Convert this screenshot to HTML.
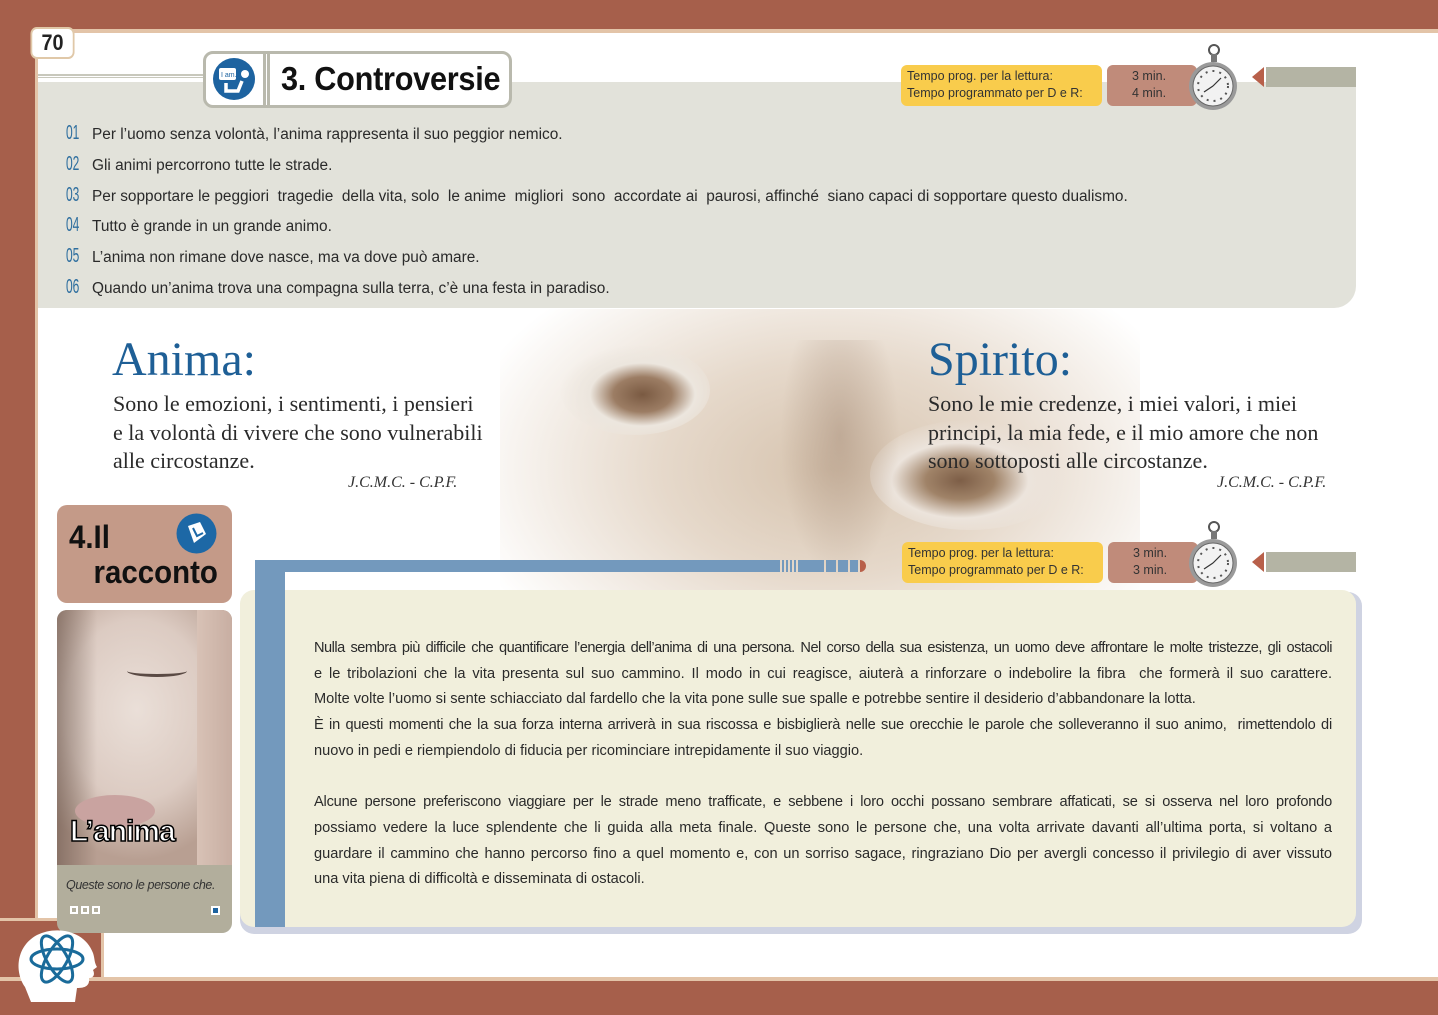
<!DOCTYPE html>
<html><head><meta charset="utf-8">
<style>
*{margin:0;padding:0;box-sizing:border-box}
body{width:1438px;height:1015px;position:relative;overflow:hidden;background:#fff;font-family:"Liberation Sans",sans-serif;color:#222}
.a{position:absolute}
.serif{font-family:"Liberation Serif",serif}
.q{position:absolute;left:66px;font-size:15.4px;color:#2a2a2a;white-space:nowrap}
.q b{display:inline-block;width:26px;color:#2f6f9f;font-weight:normal;font-size:20px;line-height:15px;transform:scaleX(.6);transform-origin:left}
.ln{text-align:justify;text-align-last:justify;white-space:nowrap;height:25.7px;font-size:14.6px;color:#2a2a2a}
.ln.l{text-align-last:left}
.tp{position:absolute;background:#f9cc4c;border-radius:6px;font-size:12.5px;color:#333;line-height:17px;padding:3px 6px;width:201px;height:41px}
.tm{position:absolute;background:#c08b7a;border-radius:6px;font-size:12.5px;color:#333;line-height:17px;padding:3px 0 0 25px;width:90px;height:41px}
</style></head><body>
<!-- frame -->
<div class="a" style="left:0;top:0;width:1438px;height:29px;background:#a65f4b"></div>
<div class="a" style="left:35px;top:29px;width:1403px;height:4px;background:#e3c4a8"></div>
<div class="a" style="left:0;top:0;width:35px;height:1015px;background:#a65f4b"></div>
<div class="a" style="left:35px;top:29px;width:3px;height:890px;background:#e3c4a8"></div>
<div class="a" style="left:0;top:918px;width:104px;height:97px;background:#a65f4b;border-top-right-radius:16px;border-right:3px solid #e3c4a8;border-top:3px solid #e3c4a8"></div>
<div class="a" style="left:0;top:977px;width:1438px;height:38px;background:#a65f4b;border-top:4px solid #e3c4a8"></div>
<div class="a" style="left:28px;top:27px;width:49px;height:32px;background:#fff;border:2px solid #e0c8a8;border-radius:7px;font-size:22px;font-weight:bold;text-align:center;line-height:28px;transform:scaleX(.9)">70</div>

<!-- top gray panel -->
<div class="a" style="left:38px;top:74px;width:170px;height:4px;border-top:2px solid #c8c8bc;border-bottom:1px solid #c8c8bc"></div>
<div class="a" style="left:38px;top:82px;width:1318px;height:226px;background:#e2e2da;border-bottom-right-radius:22px"></div>
<div class="a" style="left:203px;top:51px;width:309px;height:57px;background:#fff;border:3px solid #b9b9ad;border-radius:10px"></div>
<div class="a" style="left:263px;top:54px;width:7px;height:51px;border-left:3px solid #b9b9ad;border-right:3px solid #b9b9ad"></div>
<svg class="a" style="left:212px;top:57px" width="44" height="44" viewBox="0 0 44 44"><circle cx="22" cy="22" r="21" fill="#1d63a0"/><rect x="7" y="11" width="17" height="12" rx="2" fill="#fff"/><text x="9" y="20" font-size="7" fill="#1d63a0" font-family="Liberation Sans">I am..</text><circle cx="33" cy="17" r="4" fill="#fff"/><path d="M14 26v8h12l4-10" stroke="#fff" stroke-width="3.5" fill="none"/></svg>
<div class="a" style="left:281px;top:60px;font-size:33px;font-weight:bold;color:#111;letter-spacing:-.3px;transform:scaleX(.93);transform-origin:left">3. Controversie</div>

<div class="q" style="top:126px"><b>01</b>Per l’uomo senza volontà, l’anima rappresenta il suo peggior nemico.</div>
<div class="q" style="top:157px"><b>02</b>Gli animi percorrono tutte le strade.</div>
<div class="q" style="top:188px"><b>03</b>Per sopportare le peggiori &nbsp;tragedie &nbsp;della vita, solo &nbsp;le anime &nbsp;migliori &nbsp;sono &nbsp;accordate ai &nbsp;paurosi, affinché &nbsp;siano capaci di sopportare questo dualismo.</div>
<div class="q" style="top:218px"><b>04</b>Tutto è grande in un grande animo.</div>
<div class="q" style="top:249px"><b>05</b>L’anima non rimane dove nasce, ma va dove può amare.</div>
<div class="q" style="top:280px"><b>06</b>Quando un’anima trova una compagna sulla terra, c’è una festa in paradiso.</div>

<!-- timers top -->
<div class="tp" style="left:901px;top:65px">Tempo prog. per la lettura:<br>Tempo programmato per D e R:</div>
<div class="tm" style="left:1107px;top:65px">3 min.<br>4 min.</div>
<div class="a" style="left:1252px;top:67px;width:0;height:0;border-top:10px solid transparent;border-bottom:10px solid transparent;border-right:12px solid #b8604a"></div>
<div class="a" style="left:1266px;top:67px;width:90px;height:20px;background:#b4b4a4"></div>

<!-- face image -->
<div class="a" style="left:500px;top:309px;width:640px;height:282px;background:radial-gradient(ellipse 380px 240px at 330px 160px,#d6c3ae 0%,#e6d9cb 45%,rgba(255,255,255,0) 100%)"></div>
<div class="a" style="left:560px;top:345px;width:150px;height:90px;border-radius:50%;background:radial-gradient(ellipse at 55% 55%,#7a5a42 0,#9c7d64 25%,#ece6de 45%,rgba(240,234,228,0) 72%)"></div>
<div class="a" style="left:870px;top:420px;width:200px;height:110px;border-radius:50%;background:radial-gradient(ellipse at 45% 55%,#7d5e47 0,#a08368 22%,#ece4dc 44%,rgba(240,234,228,0) 72%)"></div>
<div class="a" style="left:780px;top:340px;width:120px;height:240px;background:radial-gradient(ellipse at 50% 40%,rgba(170,145,125,.55),rgba(200,180,160,0) 70%)"></div>

<div class="a serif" style="left:112px;top:332px;font-size:48px;color:#1e5f96">Anima:</div>
<div class="a serif" style="left:113px;top:390px;font-size:22px;line-height:28.6px;color:#2a2a2a">Sono le emozioni, i sentimenti, i pensieri<br>e la volontà di vivere che sono vulnerabili<br>alle circostanze.</div>
<div class="a serif" style="left:348px;top:474px;font-size:16px;font-style:italic;color:#333">J.C.M.C. - C.P.F.</div>
<div class="a serif" style="left:928px;top:332px;font-size:48px;color:#1e5f96">Spirito:</div>
<div class="a serif" style="left:928px;top:390px;font-size:22px;line-height:28.6px;color:#2a2a2a">Sono le mie credenze, i miei valori, i miei<br>principi, la mia fede, e il mio amore che non<br>sono sottoposti alle circostanze.</div>
<div class="a serif" style="left:1217px;top:474px;font-size:16px;font-style:italic;color:#333">J.C.M.C. - C.P.F.</div>

<!-- timers 2 -->
<div class="tp" style="left:902px;top:542px">Tempo prog. per la lettura:<br>Tempo programmato per D e R:</div>
<div class="tm" style="left:1108px;top:542px">3 min.<br>3 min.</div>
<div class="a" style="left:1252px;top:552px;width:0;height:0;border-top:10px solid transparent;border-bottom:10px solid transparent;border-right:12px solid #b8604a"></div>
<div class="a" style="left:1266px;top:552px;width:90px;height:20px;background:#b4b4a4"></div>
<svg class="a" style="left:1186px;top:42px" width="54" height="70" viewBox="0 0 54 70"><circle cx="28" cy="8" r="5" fill="none" stroke="#555" stroke-width="2"/><rect x="25" y="12" width="6" height="8" fill="#777"/><circle cx="27" cy="44" r="24" fill="#9a9a9a"/><circle cx="27" cy="44" r="20" fill="#f2f2f2" stroke="#666" stroke-width="1"/><g stroke="#555" stroke-width="2" stroke-dasharray="2 5" fill="none"><circle cx="27" cy="44" r="15"/></g><path d="M27 44L18 50M27 44l8-8" stroke="#333" stroke-width="1.2"/></svg>
<svg class="a" style="left:1186px;top:519px" width="54" height="70" viewBox="0 0 54 70"><circle cx="28" cy="8" r="5" fill="none" stroke="#555" stroke-width="2"/><rect x="25" y="12" width="6" height="8" fill="#777"/><circle cx="27" cy="44" r="24" fill="#9a9a9a"/><circle cx="27" cy="44" r="20" fill="#f2f2f2" stroke="#666" stroke-width="1"/><g stroke="#555" stroke-width="2" stroke-dasharray="2 5" fill="none"><circle cx="27" cy="44" r="15"/></g><path d="M27 44L18 50M27 44l8-8" stroke="#333" stroke-width="1.2"/></svg>

<!-- story box -->
<div class="a" style="left:240px;top:592px;width:1122px;height:342px;background:#cfd3e2;border-radius:14px"></div>
<div class="a" style="left:240px;top:590px;width:1116px;height:337px;background:#f1efdc;border-radius:14px"></div>
<div class="a" style="left:255px;top:560px;width:30px;height:367px;background:#7399bd"></div>
<div class="a" style="left:255px;top:560px;width:525px;height:12px;background:#7399bd"></div>
<div class="a" style="left:782px;top:560px;width:14px;height:12px;background:repeating-linear-gradient(90deg,#7399bd 0 2px,transparent 2px 4px)"></div>
<div class="a" style="left:798px;top:560px;width:26px;height:12px;background:#7399bd"></div>
<div class="a" style="left:826px;top:560px;width:10px;height:12px;background:#7399bd"></div>
<div class="a" style="left:838px;top:560px;width:10px;height:12px;background:#7399bd"></div>
<div class="a" style="left:850px;top:560px;width:8px;height:12px;background:#7399bd"></div>
<div class="a" style="left:860px;top:560px;width:6px;height:12px;background:#b8604a;border-radius:0 6px 6px 0"></div>

<div class="a" style="left:314px;top:636px;width:1018px;line-height:25.7px">
<div class="ln" style="letter-spacing:-.5px">Nulla sembra più difficile che quantificare l’energia dell’anima di una persona. Nel corso della sua esistenza, un uomo deve affrontare le molte tristezze, gli ostacoli</div>
<div class="ln">e le tribolazioni che la vita presenta sul suo cammino. Il modo in cui reagisce, aiuterà a rinforzare o indebolire la fibra &nbsp;che formerà il suo carattere.</div>
<div class="ln l">Molte volte l’uomo si sente schiacciato dal fardello che la vita pone sulle sue spalle e potrebbe sentire il desiderio d’abbandonare la lotta.</div>
<div class="ln" style="letter-spacing:-.2px">È in questi momenti che la sua forza interna arriverà in sua riscossa e bisbiglierà nelle sue orecchie le parole che solleveranno il suo animo, &nbsp;rimettendolo di</div>
<div class="ln l">nuovo in pedi e riempiendolo di fiducia per ricominciare intrepidamente il suo viaggio.</div>
<div class="ln l"></div>
<div class="ln" style="letter-spacing:-.2px">Alcune persone preferiscono viaggiare per le strade meno trafficate, e sebbene i loro occhi possano sembrare affaticati, se si osserva nel loro profondo</div>
<div class="ln">possiamo vedere la luce splendente che li guida alla meta finale. Queste sono le persone che, una volta arrivate davanti all’ultima porta, si voltano a</div>
<div class="ln">guardare il cammino che hanno percorso fino a quel momento e, con un sorriso sagace, ringraziano Dio per avergli concesso il privilegio di aver vissuto</div>
<div class="ln l">una vita piena di difficoltà e disseminata di ostacoli.</div>
</div>

<!-- left card -->
<div class="a" style="left:57px;top:505px;width:175px;height:98px;background:#c49a88;border-radius:10px"></div>
<div class="a" style="left:69px;top:520px;font-size:32px;font-weight:bold;color:#111;line-height:35px;transform:scaleX(.92);transform-origin:left">4.Il<br>&nbsp;&nbsp;&nbsp;racconto</div>
<svg class="a" style="left:175px;top:512px" width="43" height="43" viewBox="0 0 43 43"><circle cx="21.5" cy="21.5" r="20" fill="#1d68a6"/><path d="M13 14l12-4 6 12-12 9z" fill="#fff"/><path d="M18 16l4 8 6-3" stroke="#1d68a6" stroke-width="2" fill="none"/></svg>
<div class="a" style="left:57px;top:610px;width:175px;height:323px;background:#b2ae9c;border-radius:10px;overflow:hidden">
<div style="position:absolute;left:0;top:0;width:175px;height:255px;background:radial-gradient(ellipse 120px 150px at 80px 100px,#eadfd8 0,#dccbc2 60%,#b89f92 100%)"></div>
<div style="position:absolute;left:0;top:0;width:40px;height:255px;background:linear-gradient(90deg,rgba(90,70,60,.5),rgba(90,70,60,0))"></div>
<div style="position:absolute;left:70px;top:55px;width:60px;height:12px;border-bottom:3px solid #5a4a44;border-radius:0 0 50% 50%"></div>
<div style="position:absolute;left:18px;top:185px;width:80px;height:32px;border-radius:50%;background:#c9a3a0"></div>
<div style="position:absolute;left:140px;top:0;width:35px;height:255px;background:linear-gradient(90deg,#d8c2b6,#c8aea2)"></div>
<div style="position:absolute;left:13px;top:205px;font-size:30px;font-weight:bold;color:#fff;-webkit-text-stroke:1.5px #000;letter-spacing:-1px">L’anima</div>
<div style="position:absolute;left:9px;top:268px;font-size:12.5px;font-style:italic;color:#333;letter-spacing:-.4px">Queste sono le persone che.</div>
<div style="position:absolute;left:13px;top:296px;width:8px;height:8px;border:2px solid #fff"></div>
<div style="position:absolute;left:24px;top:296px;width:8px;height:8px;border:2px solid #fff"></div>
<div style="position:absolute;left:35px;top:296px;width:8px;height:8px;border:2px solid #fff"></div>
<div style="position:absolute;left:154px;top:296px;width:9px;height:9px;border:2px solid #fff;background:#1d63a0"></div>
</div>

<!-- head icon -->
<svg class="a" style="left:15px;top:925px" width="85" height="80" viewBox="0 0 85 80"><path d="M10 62c-10-14-10-40 12-52 20-10 48-4 56 18 2 6 1 9 4 14l-4 3c2 4 1 8-4 8 1 8-4 10-12 10l-2 14H16z" fill="#fff"/><g fill="none" stroke="#1a6b9a" stroke-width="3"><ellipse cx="42" cy="34" rx="26" ry="10"/><ellipse cx="42" cy="34" rx="26" ry="10" transform="rotate(60 42 34)"/><ellipse cx="42" cy="34" rx="26" ry="10" transform="rotate(-60 42 34)"/></g></svg>
</body></html>
